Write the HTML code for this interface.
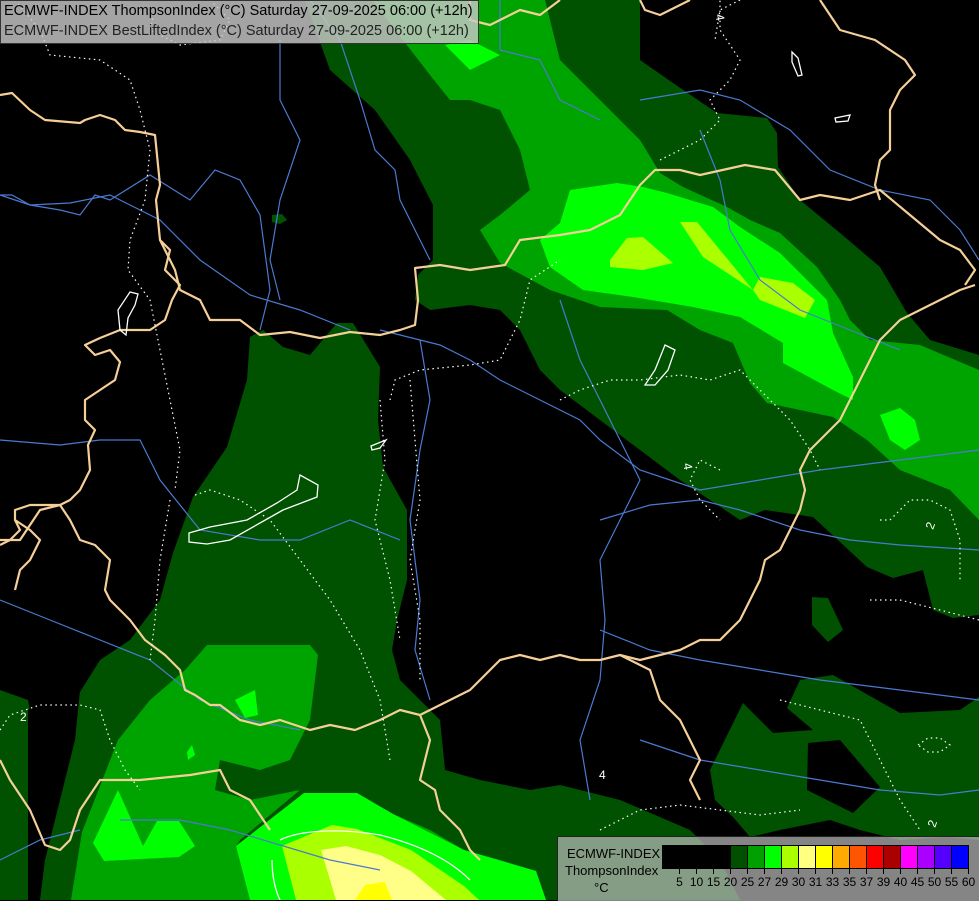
<!DOCTYPE html>
<html><head><meta charset="utf-8"><style>
html,body{margin:0;padding:0;background:#000;width:979px;height:900px;overflow:hidden}
svg{position:absolute;left:0;top:0}
.t{position:absolute;left:0;top:0;width:477px;height:42px;background:rgba(200,200,200,0.82);border:1px solid #333;font-family:"Liberation Sans",sans-serif;font-size:14.5px;color:#000;line-height:20px;white-space:nowrap}
.t div{padding-left:3px}
.lg{position:absolute;left:557px;top:836px;width:422px;height:64px;background:rgba(190,190,190,0.7);border-top:1px solid #222;border-left:1px solid #222;font-family:"Liberation Sans",sans-serif;font-size:13px;color:#000}
</style></head><body>
<svg width="979" height="900" viewBox="0 0 979 900">
<g stroke="none">
<polygon fill="#005200" points="305,0 640,0 640,60 673,83 717,113 767,118 777,133 778,167 800,200 840,233 880,267 907,313 930,340 979,355 979,615 953,618 933,610 923,570 893,578 867,567 813,517 765,510 740,520 710,500 680,480 640,450 600,420 560,390 540,370 520,330 500,310 470,305 430,310 415,300 418,275 433,260 433,205 410,160 375,110 330,70"/>
<polygon fill="#005200" points="250,337 263,330 283,347 310,355 337,323 353,323 380,367 378,420 383,467 407,510 407,580 397,620 392,650 400,680 430,710 440,720 445,770 480,780 530,790 560,785 620,800 690,830 720,860 740,900 0,900 0,690 28,700 40,760 60,760 75,700 100,660 130,640 160,600 173,553 193,497 227,447 247,380"/>
<polygon fill="#000" points="28,900 28,710 45,700 80,690 75,740 60,800 45,860 40,900"/>
<polygon fill="#005200" points="787,708 800,680 833,675 900,713 960,710 979,697 979,840 947,837 900,840 860,830 830,820 780,830 750,837 733,817 715,800 710,770 743,703 773,733 813,730"/>
<polygon fill="#000" points="808,743 840,740 880,787 853,813 807,790"/>
<polygon fill="#005200" points="812,597 828,598 843,630 828,642 812,625"/>
<polygon fill="#005200" points="272,215 282,214 287,220 280,224 272,222"/>
<polygon fill="#00a400" points="372,0 545,0 560,60 600,100 640,140 660,173 683,187 727,207 750,220 780,233 817,267 840,300 850,320 870,340 920,345 979,370 979,520 950,490 900,470 867,440 833,417 767,403 750,383 733,343 700,330 667,310 600,307 550,290 500,263 480,230 500,215 530,190 520,150 500,110 470,100 450,100 430,75"/>
<polygon fill="#00a400" points="207,645 310,645 318,655 310,720 290,760 260,770 220,760 215,790 250,800 300,790 240,840 236,846 250,900 71,900 82,832 118,740 150,700 185,670"/>
<polygon fill="#00a400" points="250,900 236,846 304,793 357,793 393,814 430,830 464,850 500,860 536,871 546,900"/>
<polygon fill="#00ff00" points="560,223 570,190 617,183 643,187 667,193 713,207 740,227 780,253 807,280 827,300 833,333 853,377 853,400 833,390 783,363 783,343 740,317 693,307 633,297 583,290 550,267 540,240"/>
<polygon fill="#00ff00" points="445,45 470,40 500,55 470,70"/>
<polygon fill="#00ff00" points="880,415 900,408 915,420 920,440 905,450 890,440"/>
<polygon fill="#00ff00" points="93,843 118,790 143,846 157,821 179,821 195,846 179,857 104,861"/>
<polygon fill="#00ff00" points="236,846 304,793 357,793 393,814 464,850 536,871 546,900 250,900"/>
<polygon fill="#00ff00" points="187,752 192,745 195,755 188,760"/>
<polygon fill="#00ff00" points="235,700 255,690 258,715 245,718"/>
<polygon fill="#aaff00" points="610,260 627,238 643,237 673,263 643,270 610,267"/>
<polygon fill="#aaff00" points="680,222 697,222 753,290 760,277 793,283 815,300 805,318 760,300 753,290 703,257"/>
<polygon fill="#aaff00" points="282,846 332,825 357,829 411,850 464,886 479,900 296,900"/>
<polygon fill="#ffff88" points="321,850 346,846 380,855 411,871 446,900 336,900"/>
<polygon fill="#ffff00" points="355,900 365,885 385,882 392,900"/>
</g>
<g fill="none" stroke="#4a7ad0" stroke-width="1.2">
<polyline points="0,195 12,195 30,205 60,210 80,215 95,195 110,200 150,175 190,200 215,170 240,180 260,215 270,290 260,330"/>
<polyline points="0,195 15,200 30,205 70,203 110,195 160,220 200,260 250,295 300,310 350,330"/>
<polyline points="280,40 280,100 300,140 280,200 270,260 280,300"/>
<polyline points="310,0 340,40 360,100 375,150 395,170 400,200 430,260"/>
<polyline points="0,440 60,445 100,440 140,440 160,480 200,530 260,540 300,540 350,520 400,540"/>
<polyline points="0,600 50,620 100,640 150,660 200,700 250,720 300,730"/>
<polyline points="380,330 440,345 470,360 500,380 540,400 580,420 600,440 640,470 700,490 760,480 820,470 900,460 979,450"/>
<polyline points="420,340 430,400 420,450 410,520 420,600 415,650 430,700"/>
<polyline points="560,300 580,360 600,400 620,440 640,480 620,520 600,560 605,620 600,680 580,740 590,800"/>
<polyline points="600,520 650,505 700,500 740,510 800,530 850,540 900,545 979,550"/>
<polyline points="600,630 650,650 700,660 760,670 820,680 900,690 979,700"/>
<polyline points="640,740 700,760 760,770 820,780 880,790 940,795 979,790"/>
<polyline points="500,0 500,50 540,60 560,100 600,120"/>
<polyline points="640,100 700,90 740,100 790,130 830,170 880,190 930,200 960,230 979,260"/>
<polyline points="700,130 720,180 730,230 760,280 800,310 850,330 900,350"/>
<polyline points="120,820 180,820 230,830 280,845 330,860 380,870"/>
<polyline points="0,860 40,840 80,830"/>
</g>
<g fill="none" stroke="#f5cf98" stroke-width="2.2" stroke-linejoin="round">
<polyline points="0,95 12,93 30,110 45,120 80,123 85,120 100,115 115,120 125,130 140,132 155,135 160,185 156,200 160,240 165,250 175,270 180,290 200,300 210,320 240,320 260,335 290,332 320,338 350,332 380,335 400,330 415,325 418,300 415,268 440,265 470,270 505,265 520,240 560,235 590,230 620,215 640,185 655,170 680,170 700,175 745,165 775,170 800,200 820,195 850,200 880,190 910,215 940,240 960,250 975,270 965,285"/>
<polyline points="160,240 170,250 165,270 180,285 172,300 165,320 150,330 140,330 120,330 100,338 85,345 95,355 110,350 120,362 115,380 100,390 85,400 85,420 95,430 88,445 90,470 80,490 70,500 60,505 45,505 30,505 15,510 15,520 30,530 40,540 30,560 20,570 15,590"/>
<polyline points="0,540 20,540 40,510 60,505"/>
<polyline points="15,520 20,530 10,540 0,545"/>
<polyline points="60,505 70,520 80,540 95,545 110,560 105,590 110,600 130,620 145,640 165,655 180,670 185,690 195,695 210,705 220,705 240,720 260,725 280,720 310,730 330,725 355,730 380,720 400,710 420,715 440,705 470,690 490,670 500,660 520,655 540,660 560,655 580,660 600,660 620,655 640,660 680,650 700,640 720,640 740,620 750,600 760,580 765,560 780,550 790,530 800,510 805,490 800,470 810,450 820,440 840,420 850,400 860,380 870,360 880,340 890,330 900,320 920,310 940,300 960,290 975,285"/>
<polyline points="0,760 10,780 30,810 45,845 60,850 70,840 80,810 100,780 140,780 190,775 220,770 230,790 250,800 270,830"/>
<polyline points="420,715 430,740 425,760 420,780 435,790 440,810 460,830 470,850 480,860"/>
<polyline points="620,655 650,670 660,700 680,720 690,740 700,760 690,780 700,800"/>
<polyline points="470,0 470,20 490,25 520,10 540,15 560,0"/>
<polyline points="640,0 645,10 660,15 690,0"/>
<polyline points="820,0 840,30 875,40 905,60 915,75 900,90 890,110 890,150 880,160 875,185 880,200"/>
</g>
<g fill="none" stroke="#fff" stroke-width="1.2" stroke-dasharray="1.5,3.5">
<polyline points="15,0 40,30 50,55 100,60 130,80 140,110 150,150 145,200 130,240 128,270 150,300 160,350 170,400 180,450 175,490"/>
<polyline points="210,0 230,20 220,40 180,45 150,30 155,10"/>
<polyline points="195,495 210,490 240,500 270,520 300,560 330,600 360,650 380,700 390,760"/>
<polyline points="170,500 160,560 155,620 150,660"/>
<polyline points="390,400 395,380 420,370 470,365 500,360 520,320 530,280 560,260"/>
<polyline points="410,380 415,440 420,500 410,560 420,620 420,680"/>
<polyline points="380,400 385,460 375,520 390,580 400,640"/>
<polyline points="0,730 10,715 40,705 80,705 100,710 110,740 125,770 140,790"/>
<polyline points="560,400 580,390 610,380 640,380 680,375 710,380 740,370 760,390 790,420 810,450 820,470"/>
<polyline points="720,470 700,460 690,480 700,500 720,520"/>
<polyline points="880,520 890,520 910,500 930,500 950,510 960,540 960,580"/>
<polyline points="870,600 900,600 940,610 979,620"/>
<polyline points="780,700 820,710 860,720 880,760 900,800 920,830"/>
<polyline points="600,830 640,810 680,805 720,810 760,815 800,810"/>
<polyline points="918,745 928,738 940,738 950,745 940,752 928,752 918,745"/>
<polyline points="660,160 700,140 720,120 710,100 730,80 740,60 720,30 720,0"/>
<polyline points="740,0 720,10 715,40"/>
</g>
<g fill="none" stroke="#fff" stroke-width="1.3">
<polygon points="189,533 210,527 247,520 277,503 297,490 300,475 318,485 317,497 283,510 230,540 207,544 189,542"/>
<polygon points="130,292 138,294 135,305 128,318 126,335 120,330 118,310"/>
<polygon points="371,446 386,440 380,448 372,450"/>
<polygon points="665,345 675,350 668,370 655,385 645,385 655,370"/>
<polygon points="792,52 798,58 802,75 798,76 792,62"/>
<polygon points="835,118 850,115 848,121 836,122"/>
<path d="M280,840 C300,830 340,828 380,835 C420,845 450,860 470,880" />
<path d="M272,860 C272,875 275,890 280,900" />
</g>
<g font-family="Liberation Sans, sans-serif" font-size="12" fill="#fff">
<text x="20" y="721">2</text>
<text x="683" y="472" transform="rotate(80 688 468)">4</text>
<text x="599" y="779">4</text>
<text x="926" y="528" transform="rotate(-70 931 524)">2</text>
<text x="928" y="826" transform="rotate(-70 933 822)">2</text>
<text x="716" y="22" transform="rotate(80 720 18)">4</text>
</g>
</svg>
<div class="t"><div>ECMWF-INDEX ThompsonIndex (°C) Saturday 27-09-2025 06:00 (+12h)</div><div style="color:#222">ECMWF-INDEX BestLiftedIndex (°C) Saturday 27-09-2025 06:00 (+12h)</div></div>
<div class="lg">
<div style="position:absolute;left:9px;top:9px">ECMWF-INDEX</div>
<div style="position:absolute;left:7px;top:26px">ThompsonIndex</div>
<div style="position:absolute;left:36px;top:43px">°C</div>
<svg width="320" height="64" style="position:absolute;left:104px;top:0" viewBox="0 0 320 64">
<g stroke="#000" stroke-width="1">
<rect x="0.5" y="8.5" width="17" height="23" fill="#000"/>
<rect x="17.5" y="8.5" width="17" height="23" fill="#000"/>
<rect x="34.5" y="8.5" width="17" height="23" fill="#000"/>
<rect x="51.5" y="8.5" width="17" height="23" fill="#000"/>
<rect x="68.5" y="8.5" width="17" height="23" fill="#005000"/>
<rect x="85.5" y="8.5" width="17" height="23" fill="#00a000"/>
<rect x="102.5" y="8.5" width="17" height="23" fill="#00ff00"/>
<rect x="119.5" y="8.5" width="17" height="23" fill="#aaff00"/>
<rect x="136.5" y="8.5" width="17" height="23" fill="#ffff80"/>
<rect x="153.5" y="8.5" width="17" height="23" fill="#ffff00"/>
<rect x="170.5" y="8.5" width="17" height="23" fill="#ffaa00"/>
<rect x="187.5" y="8.5" width="17" height="23" fill="#ff5500"/>
<rect x="204.5" y="8.5" width="17" height="23" fill="#ff0000"/>
<rect x="221.5" y="8.5" width="17" height="23" fill="#aa0000"/>
<rect x="238.5" y="8.5" width="17" height="23" fill="#ff00ff"/>
<rect x="255.5" y="8.5" width="17" height="23" fill="#aa00ff"/>
<rect x="272.5" y="8.5" width="17" height="23" fill="#5500ff"/>
<rect x="289.5" y="8.5" width="17" height="23" fill="#0000ff"/>
<path d="M17.5 31v6M34.5 31v6M51.5 31v6M68.5 31v6M85.5 31v6M102.5 31v6M119.5 31v6M136.5 31v6M153.5 31v6M170.5 31v6M187.5 31v6M204.5 31v6M221.5 31v6M238.5 31v6M255.5 31v6M272.5 31v6M289.5 31v6M306.5 31v6"/>
</g>
<g font-family="Liberation Sans, sans-serif" font-size="12" fill="#000" text-anchor="middle">
<text x="17.5" y="49">5</text><text x="34.5" y="49">10</text><text x="51.5" y="49">15</text><text x="68.5" y="49">20</text><text x="85.5" y="49">25</text><text x="102.5" y="49">27</text><text x="119.5" y="49">29</text><text x="136.5" y="49">30</text><text x="153.5" y="49">31</text><text x="170.5" y="49">33</text><text x="187.5" y="49">35</text><text x="204.5" y="49">37</text><text x="221.5" y="49">39</text><text x="238.5" y="49">40</text><text x="255.5" y="49">45</text><text x="272.5" y="49">50</text><text x="289.5" y="49">55</text><text x="306.5" y="49">60</text>
</g>
</svg>
</div>
</body></html>
